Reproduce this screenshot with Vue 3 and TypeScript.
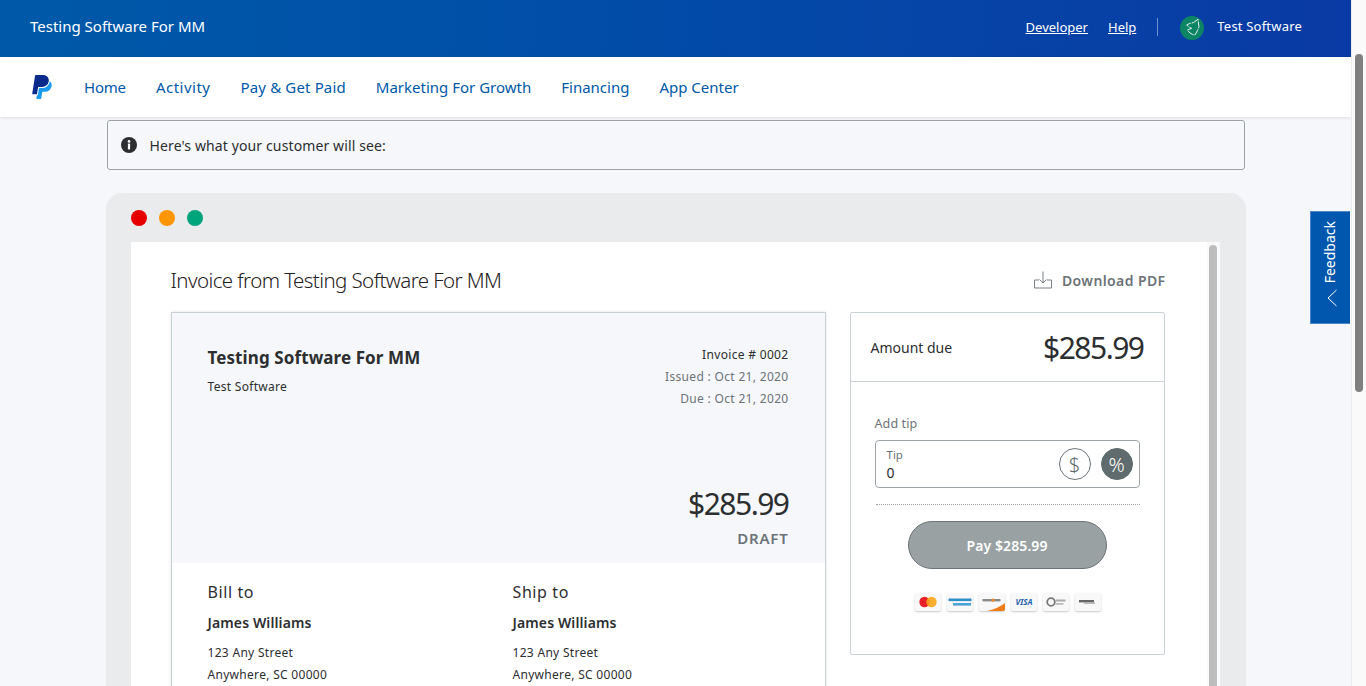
<script setup lang="ts">
const navItems: string[] = ['Home', 'Activity', 'Pay & Get Paid', 'Marketing For Growth', 'Financing', 'App Center']
const parties = [
  { title: 'Bill to', name: 'James Williams', street: '123 Any Street', city: 'Anywhere, SC 00000' },
  { title: 'Ship to', name: 'James Williams', street: '123 Any Street', city: 'Anywhere, SC 00000' },
]
</script>

<template>
  <div class="page">
    <div class="main">
      <header class="topbar">
        <span class="biz">Testing Software For MM</span>
        <div class="top-right">
          <a class="toplink">Developer</a>
          <a class="toplink help">Help</a>
          <span class="divider"></span>
          <span class="avatar">
            <svg width="24" height="24" viewBox="0 0 24 24">
              <circle cx="12" cy="12" r="12" fill="#0b8564" />
              <path d="M13.3 6.7 L18 3.3 L18.4 7 L19 10.7 L17.5 14.5 L15 19 L12.5 18.4 L10 17 L7.3 14 L11.6 12.3 L8.5 10.8 L6.7 9 L10 7.3 Z" fill="none" stroke="#fff" stroke-width="0.9" stroke-linejoin="round" stroke-dasharray="7 1" />
            </svg>
          </span>
          <span class="user">Test Software</span>
        </div>
      </header>

      <nav class="nav">
        <svg class="logo" width="26" height="24" viewBox="0 0 24 24">
          <path fill="#1a9bf0" d="M19.79 6.142c-.01.087-.01.175-.023.261a7.76 7.76 0 0 1-7.695 6.598H9.007l-.283 1.795-.013.083-.692 4.39-.134.843-.014.088H6.86l-.497 3.15a.562.562 0 0 0 .555.65h3.612c.34 0 .63-.249.683-.585l.952-6.031a.692.692 0 0 1 .683-.584h2.126a6.793 6.793 0 0 0 6.707-5.752c.306-1.95-.466-3.744-1.89-4.906z" />
          <path fill="#0a2a8c" d="M7.016 19.198h-4.2a.562.562 0 0 1-.555-.65L5.093.584A.692.692 0 0 1 5.776 0h7.222c3.417 0 5.904 2.488 5.846 5.5-.006.25-.027.5-.066.747A6.794 6.794 0 0 1 12.071 12H8.743a.69.69 0 0 0-.682.583l-.325 2.056-.013.083-.692 4.39-.015.087z" />
        </svg>
        <a v-for="item in navItems" :key="item" class="nav-item">{{ item }}</a>
      </nav>

      <div class="content">
        <div class="notice">
          <svg width="16" height="16" viewBox="0 0 16 16">
            <circle cx="8" cy="8" r="8" fill="#2c2e2f" />
            <circle cx="8" cy="4.4" r="1.3" fill="#fff" />
            <rect x="6.9" y="6.6" width="2.2" height="5.8" fill="#fff" />
          </svg>
          <span>Here's what your customer will see:</span>
        </div>

        <div class="frame">
          <div class="dots">
            <span class="dot red"></span>
            <span class="dot orange"></span>
            <span class="dot green"></span>
          </div>
          <div class="viewport">
            <div class="sheet">
              <div class="title-row">
                <h1 class="title">Invoice from Testing Software For MM</h1>
                <div class="download">
                  <svg width="20" height="20" viewBox="0 0 20 20" fill="none" stroke="#6c7378" stroke-width="0.9">
                    <path d="M6 10 H1.5 V18 H18.5 V10 H14" />
                    <path d="M10 1.5 V13 M6.5 9.5 L10 13 L13.5 9.5" />
                  </svg>
                  <span>Download PDF</span>
                </div>
              </div>

              <div class="columns">
                <section class="invoice">
                  <div class="inv-head">
                    <div class="inv-top">
                      <div>
                        <div class="inv-biz">Testing Software For MM</div>
                        <div class="inv-sub">Test Software</div>
                      </div>
                      <div class="inv-meta">
                        <div class="dark">Invoice # 0002</div>
                        <div>Issued : Oct 21, 2020</div>
                        <div>Due : Oct 21, 2020</div>
                      </div>
                    </div>
                    <div class="inv-total">
                      <div class="money">$285.99</div>
                      <div class="draft">DRAFT</div>
                    </div>
                  </div>
                  <div class="parties">
                    <div v-for="p in parties" :key="p.title" class="party">
                      <div class="party-title">{{ p.title }}</div>
                      <div class="party-name">{{ p.name }}</div>
                      <div class="party-line">{{ p.street }}</div>
                      <div class="party-line">{{ p.city }}</div>
                    </div>
                  </div>
                </section>

                <aside class="pay">
                  <div class="due">
                    <span class="due-label">Amount due</span>
                    <span class="money">$285.99</span>
                  </div>
                  <div class="pay-body">
                    <div class="tip-label">Add tip</div>
                    <div class="tip-box">
                      <div class="tip-field">
                        <span class="tip-small">Tip</span>
                        <span class="tip-value">0</span>
                      </div>
                      <span class="unit">$</span>
                      <span class="unit active">%</span>
                    </div>
                    <div class="dotted"></div>
                    <button class="pay-btn" type="button">Pay $285.99</button>
                    <div class="brands">
                      <span class="brand">
                        <svg width="26" height="18" viewBox="0 0 26 18">
                          <circle cx="9.5" cy="9" r="5.2" fill="#e8202a" />
                          <circle cx="16.5" cy="9" r="5.2" fill="#f9a51a" opacity="0.9" />
                        </svg>
                      </span>
                      <span class="brand">
                        <svg width="26" height="18" viewBox="0 0 26 18">
                          <rect x="1.5" y="5.5" width="23" height="2.6" fill="#2f8fc9" />
                          <rect x="6" y="10" width="18" height="2.6" fill="#4ba4d8" />
                        </svg>
                      </span>
                      <span class="brand">
                        <svg width="26" height="18" viewBox="0 0 26 18">
                          <rect x="3.5" y="6" width="18" height="2.4" fill="#8a8a8a" />
                          <circle cx="14" cy="7.2" r="1.6" fill="#ef8a2a" />
                          <path d="M8 18 Q20 15 26 10 V18 Z" fill="#ef7d1a" />
                        </svg>
                      </span>
                      <span class="brand"><span class="visa">VISA</span></span>
                      <span class="brand">
                        <svg width="26" height="18" viewBox="0 0 26 18">
                          <circle cx="8" cy="9" r="3.8" fill="none" stroke="#777" stroke-width="1.8" />
                          <rect x="12.5" y="6.5" width="10" height="2" fill="#aaa" />
                          <rect x="12.5" y="10" width="8" height="1.8" fill="#bbb" />
                        </svg>
                      </span>
                      <span class="brand">
                        <svg width="26" height="18" viewBox="0 0 26 18">
                          <rect x="4" y="7" width="15" height="2.4" fill="#666" />
                          <rect x="9" y="9.4" width="11" height="1.4" fill="#aaa" />
                        </svg>
                      </span>
                    </div>
                  </div>
                </aside>
              </div>
            </div>
            <div class="inner-track"><span class="inner-thumb"></span></div>
          </div>
        </div>
      </div>

      <div class="feedback">
        <span class="feedback-text">Feedback</span>
        <svg class="chevron" width="10" height="18" viewBox="0 0 10 18" fill="none" stroke="#fff" stroke-width="1">
          <path d="M9.5 1 L1 9 L9.5 17" />
        </svg>
      </div>
    </div>
    <div class="page-track"><span class="page-thumb"></span></div>
  </div>
</template>

<style>
html, body { margin: 0; padding: 0; overflow: hidden; }
</style>

<style scoped>
.page {
  display: flex;
  height: 686px;
  overflow: hidden;
  background: #f5f7fa;
  font-family: "Noto Sans", "Open Sans", sans-serif;
  color: #2c2e2f;
}
.main { position: relative; flex: 1; min-width: 0; overflow: hidden; }
.page-track {
  width: 15px;
  flex: none;
  background: #fafafa;
  border-left: 1px solid #ececec;
  box-sizing: border-box;
  padding: 54px 3px 0 3px;
}
.page-thumb { display: block; width: 8px; height: 338px; border-radius: 4px; background: #808080; }

.topbar {
  height: 57px;
  display: flex;
  align-items: center;
  justify-content: space-between;
  padding: 0 49px 3px 30px;
  background: linear-gradient(90deg, #0059a8 0%, #0050a8 35%, #0a3aa5 100%);
  color: #fff;
  box-sizing: border-box;
}
.biz { font-size: 15px; letter-spacing: 0; position: relative; top: -1px; }
.top-right { display: flex; align-items: center; }
.toplink { font-size: 13px; text-decoration: underline; color: #fff; }
.help { margin-left: 20px; }
.divider { width: 1px; height: 18px; background: #6f92cf; margin: 0 22px 0 21px; }
.avatar { display: flex; width: 24px; height: 24px; position: relative; top: 1px; }
.user { font-size: 13px; margin-left: 13px; letter-spacing: 0.2px; position: relative; top: -1px; }

.nav {
  position: relative;
  height: 60px;
  display: flex;
  align-items: center;
  background: #fff;
  box-shadow: 0 1px 3px rgba(0, 0, 0, 0.1);
  padding-left: 29px;
  box-sizing: border-box;
  gap: 30px;
}
.logo { margin-right: -1px; }
.nav-item { font-size: 15px; color: #0059a8; }
.nav-item:nth-of-type(1) { letter-spacing: -0.2px; }
.nav-item:nth-of-type(2) { letter-spacing: 0.5px; }
.nav-item:nth-of-type(3) { letter-spacing: 0.15px; }

.content { padding-top: 3px; }
.notice {
  width: 1138px;
  height: 50px;
  margin: 0 auto;
  box-sizing: border-box;
  display: flex;
  align-items: center;
  gap: 13px;
  padding-left: 13px;
  border: 1px solid #9da3a6;
  border-radius: 3px;
  background: #f5f7fa;
  font-size: 14px;
  letter-spacing: 0.12px;
}
.frame {
  width: 1140px;
  height: 600px;
  margin: 23px auto 0;
  box-sizing: border-box;
  padding: 0 26px 0 25px;
  background: #eaebed;
  border-radius: 16px 16px 0 0;
}
.dots { height: 49px; display: flex; align-items: center; gap: 12px; }
.dot { width: 16px; height: 16px; border-radius: 50%; }
.red { background: #e60000; }
.orange { background: #ff9600; }
.green { background: #00a57c; }

.viewport { display: flex; background: #fff; height: 551px; }
.sheet { flex: 1; min-width: 0; padding: 0 41px 0 40px; }
.inner-track { width: 13px; background: #fafafa; flex: none; padding: 3px 3px 0 2px; box-sizing: border-box; }
.inner-thumb { display: block; width: 8px; height: 100%; background: #bdbdbd; border-radius: 4px 4px 0 0; }

.title-row { height: 70px; display: flex; align-items: center; justify-content: space-between; padding-top: 6px; box-sizing: border-box; }
.title { margin: 0; font-size: 20.5px; font-weight: 300; letter-spacing: -0.58px; color: #1f2122; }
.download { display: flex; align-items: center; gap: 9px; color: #6c7378; font-size: 14px; font-weight: 600; letter-spacing: 0.4px; }

.columns { display: flex; gap: 24px; align-items: flex-start; }
.invoice {
  width: 655px;
  height: 500px;
  flex: none;
  box-sizing: border-box;
  border: 1px solid #cbd2d6;
  box-shadow: 0 0 3px rgba(0, 0, 0, 0.12);
  background: #fff;
}
.inv-head { height: 250px; background: #f5f7fa; padding: 31px 36px 0; box-sizing: border-box; display: flex; flex-direction: column; }
.inv-top { display: flex; justify-content: space-between; height: 137px; }
.inv-biz { font-size: 17px; font-weight: 700; line-height: 28px; letter-spacing: 0.1px; }
.inv-sub { font-size: 12px; line-height: 18px; margin-top: 6px; letter-spacing: 0.3px; }
.inv-meta { font-size: 12px; line-height: 22px; text-align: right; color: #6c7378; letter-spacing: 0.32px; }
.inv-meta .dark { color: #2c2e2f; }
.inv-total { text-align: right; }
.money { font-size: 30px; font-weight: 400; letter-spacing: -1.5px; line-height: 46px; }
.draft { font-size: 15px; font-weight: 600; color: #6c7378; line-height: 22px; letter-spacing: 0.8px; }

.parties { display: flex; padding: 16px 36px 0; }
.party { width: 305px; flex: none; }
.party-title { font-size: 16px; line-height: 26px; letter-spacing: 0.6px; }
.party-name { font-size: 14px; font-weight: 600; line-height: 22px; margin-top: 7px; letter-spacing: 0.12px; }
.party-line { font-size: 12px; line-height: 22px; letter-spacing: 0.3px; }
.party-name + .party-line { margin-top: 8px; }

.pay { width: 315px; height: 343px; flex: none; box-sizing: border-box; border: 1px solid #cbd2d6; border-radius: 2px; }
.due { height: 69px; display: flex; align-items: center; justify-content: space-between; padding: 1px 20px 0 20px; border-bottom: 1px solid #cbd2d6; box-sizing: border-box; }
.due-label { font-size: 14px; }
.pay-body { padding: 32px 24px 0; }
.tip-label { font-size: 12.5px; color: #6c7378; line-height: 20px; letter-spacing: 0.1px; }
.tip-box {
  height: 48px;
  margin-top: 6px;
  box-sizing: border-box;
  border: 1px solid #9da3a6;
  border-radius: 4px;
  display: flex;
  align-items: center;
  padding: 0 6px 0 11px;
  gap: 10px;
}
.tip-field { flex: 1; display: flex; flex-direction: column; padding-top: 1px; }
.tip-small { font-size: 11.5px; color: #6c7378; line-height: 13px; }
.tip-value { font-size: 14px; line-height: 19px; margin-top: 2px; }
.unit {
  width: 32px;
  height: 32px;
  box-sizing: border-box;
  border: 1px solid #6c7378;
  border-radius: 50%;
  display: flex;
  align-items: center;
  justify-content: center;
  color: #5f6b6d;
  font-size: 20px;
  font-weight: 300;
}
.unit.active { background: #5f6b6d; border-color: #5f6b6d; color: #fff; }
.dotted { border-top: 1px dotted #9da3a6; margin: 16px 0 0 1px; }
.pay-btn {
  display: block;
  width: 199px;
  height: 48px;
  margin: 16px auto 0;
  border: 1px solid #6c7378;
  border-radius: 24px;
  background: #99a1a3;
  color: #fff;
  font: 600 14px "Noto Sans", "Open Sans", sans-serif;
  letter-spacing: 0.1px;
}
.brands { display: flex; justify-content: center; gap: 6px; margin-top: 24px; padding-left: 2px; }
.brand { width: 26px; height: 18px; border-radius: 2px; background: #f8f8f8; box-shadow: 0 1px 2px rgba(0, 0, 0, 0.22); display: flex; align-items: center; justify-content: center; overflow: hidden; }
.visa { font-size: 8px; font-weight: 700; font-style: italic; color: #1f64ad; line-height: 1; }

.feedback {
  position: absolute;
  left: 1310px;
  top: 211px;
  width: 40px;
  height: 113px;
  box-sizing: border-box;
  background: #0057ad;
  border: 1px solid #4a86c8;
  border-right: 0;
  display: flex;
  flex-direction: column;
  align-items: center;
  justify-content: flex-end;
  gap: 6px;
  padding-bottom: 16px;
  color: #fff;
}
.feedback-text { writing-mode: vertical-rl; transform: rotate(180deg); font-size: 14px; line-height: 16px; position: relative; left: -1px; }
.chevron { position: relative; left: 1px; }
</style>
